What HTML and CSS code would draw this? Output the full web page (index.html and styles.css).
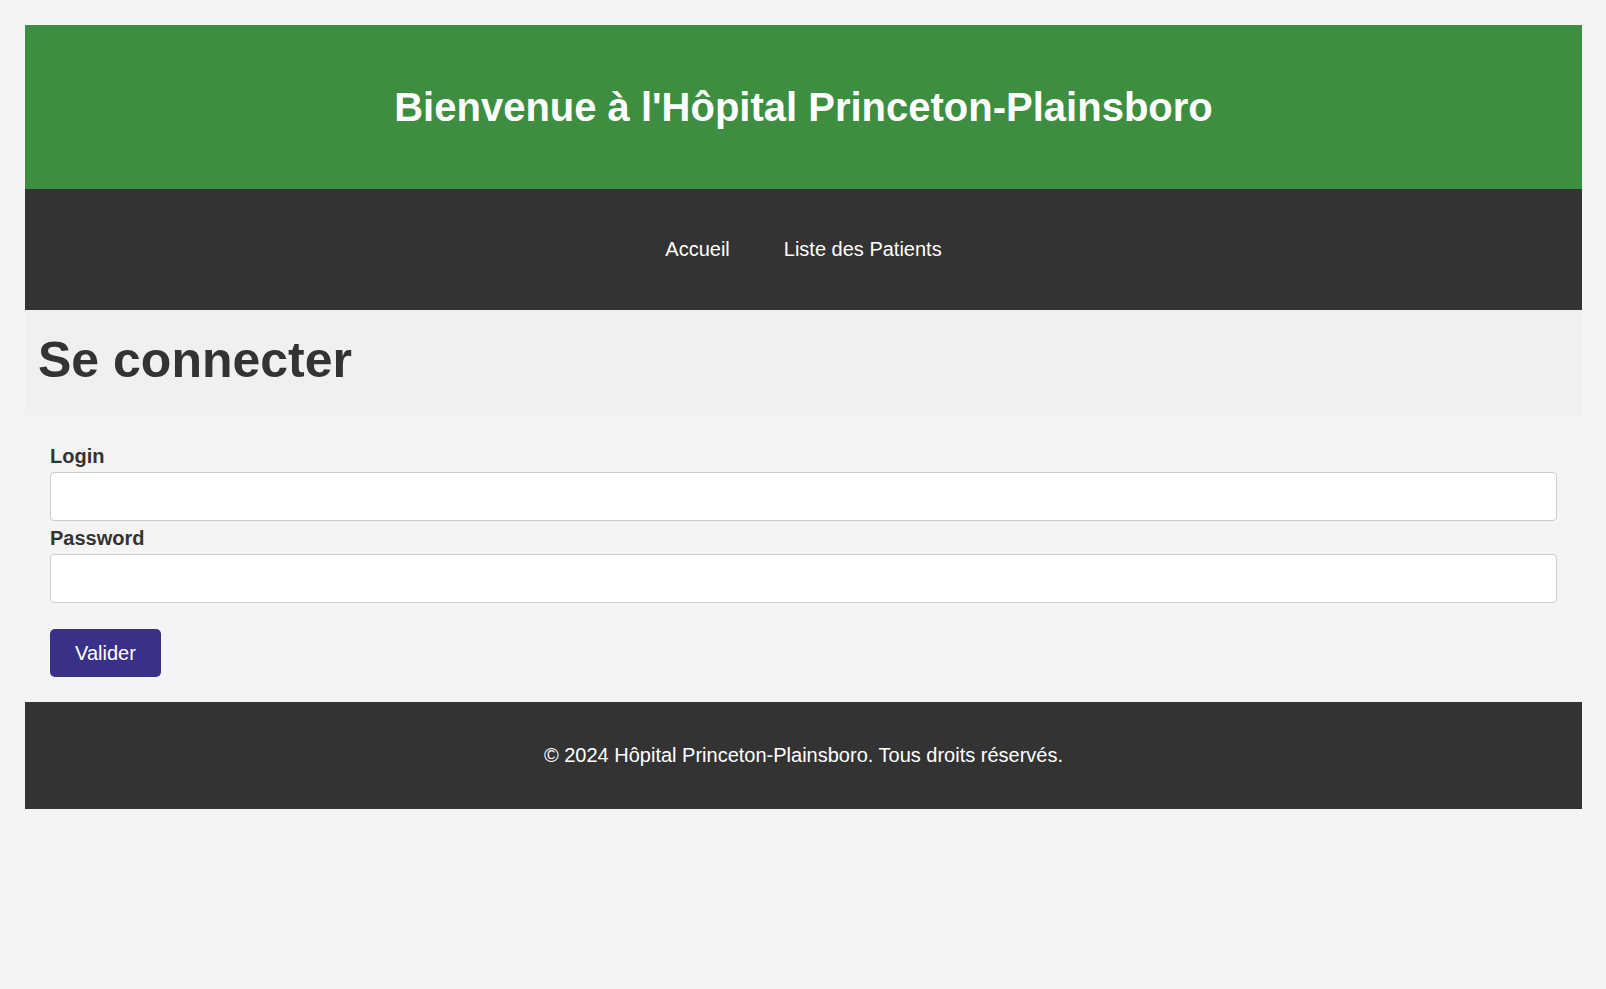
FILE: index.html
```html
<!DOCTYPE html>
<html lang="fr">
<head>
<meta charset="utf-8">
<title>Se connecter</title>
<link rel="stylesheet" href="styles.css">
</head>
<body>
<div class="page">
  <header class="site-header">
    <h1 class="site-title">Bienvenue à l'Hôpital Princeton-Plainsboro</h1>
  </header>
  <nav class="site-nav">
    <ul class="nav-list">
      <li><a class="nav-link" href="#">Accueil</a></li>
      <li><a class="nav-link" href="#">Liste des Patients</a></li>
    </ul>
  </nav>
  <section class="page-heading">
    <h2 class="page-title">Se connecter</h2>
  </section>
  <form class="login-form">
    <label class="field-label" for="login">Login</label>
    <input class="field-input" type="text" id="login" name="login">
    <label class="field-label" for="password">Password</label>
    <input class="field-input" type="password" id="password" name="password">
    <button class="submit-btn" type="submit">Valider</button>
  </form>
  <footer class="site-footer">
    <p class="footer-text">© 2024 Hôpital Princeton-Plainsboro. Tous droits réservés.</p>
  </footer>
</div>
</body>
</html>
```
FILE: styles.css
```css
* { box-sizing: border-box; }
html, body { margin: 0; padding: 0; }
body {
  background: #f4f4f4;
  font-family: "Liberation Sans", Arial, sans-serif;
  color: #333;
  font-size: 20px;
}
.page {
  padding: 25px 24px 0 25px;
}
.site-header {
  background: #3e8e41;
  padding: 32px 0;
  text-align: center;
}
.site-title {
  margin: 0;
  padding: 27px 0;
  font-size: 40px;
  line-height: 46px;
  font-weight: bold;
  color: #fff;
}
.site-nav {
  background: #333;
  padding: 48px 0 49px;
}
.nav-list {
  list-style: none;
  margin: 0;
  padding: 0;
  display: flex;
  justify-content: center;
  gap: 54px;
  line-height: 24px;
}
.nav-link {
  color: #fff;
  text-decoration: none;
  font-size: 20px;
}
.page-heading {
  background: #f0f0f0;
  padding: 22px 12px 26px 13px;
}
.page-title {
  margin: 0;
  font-size: 50px;
  line-height: 57px;
  font-weight: bold;
  color: #333;
}
.login-form {
  padding: 25px;
  display: flex;
  flex-direction: column;
  align-items: flex-start;
}
.field-label {
  display: block;
  font-weight: bold;
  font-size: 20px;
  line-height: 23px;
  margin: 5px 0 4px;
}
.field-input {
  display: block;
  width: 100%;
  height: 49px;
  margin: 0 0 1px;
  border: 1px solid #ccc;
  border-radius: 4px;
  background: #fff;
  font-size: 20px;
  font-family: inherit;
  padding: 0 12px;
}
.submit-btn {
  margin-top: 25px;
  background: #3b3088;
  color: #fff;
  border: 0;
  border-radius: 5px;
  font-family: inherit;
  font-size: 20px;
  line-height: 24px;
  padding: 12px 24px;
  width: 111px;
  cursor: pointer;
}
.site-footer {
  background: #333;
  color: #fff;
  text-align: center;
  padding: 41px 0;
}
.footer-text {
  margin: 0;
  font-size: 20px;
  line-height: 25px;
}
```
